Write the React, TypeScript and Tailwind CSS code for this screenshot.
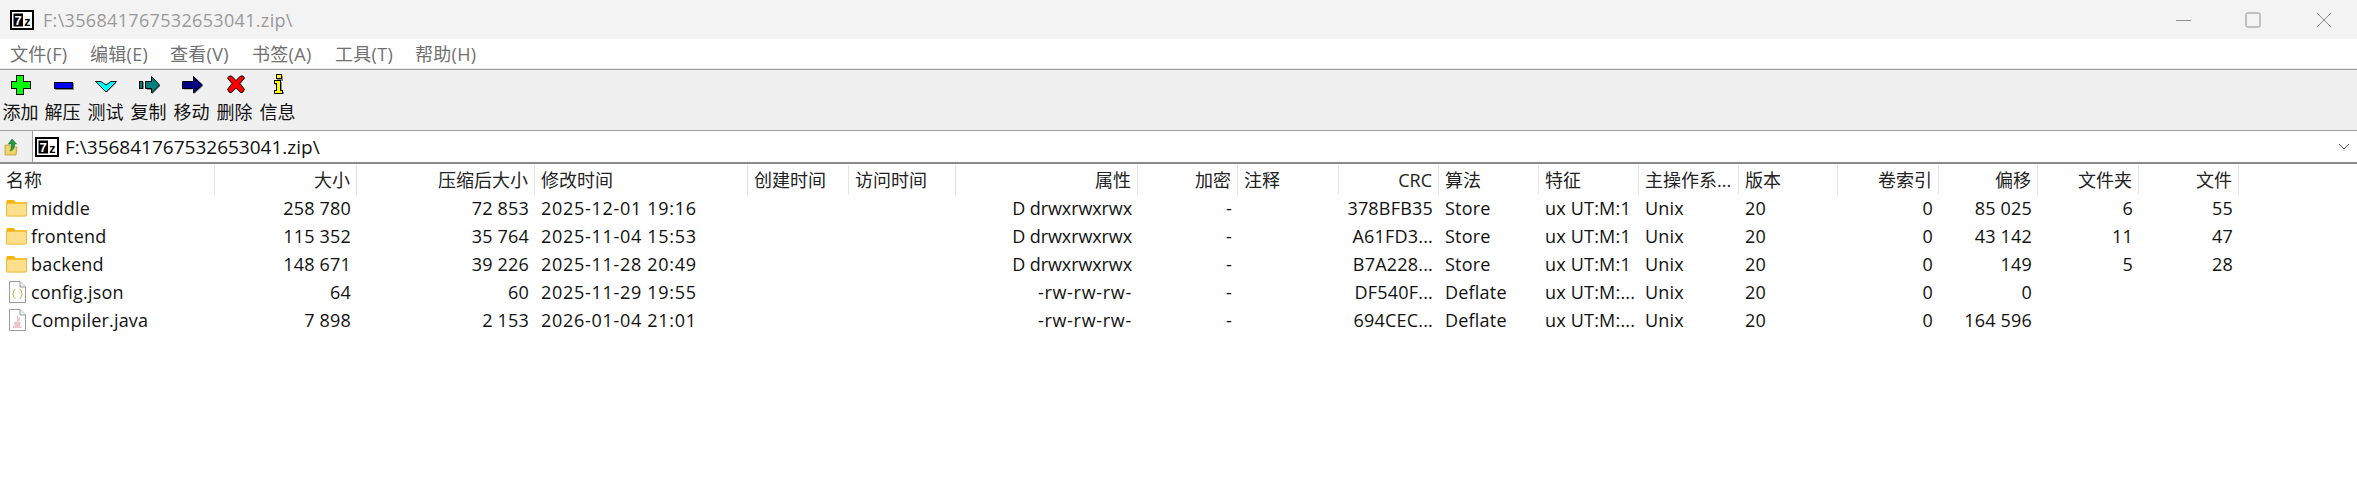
import React from "react";

const sans = "font-['Open_Sans','Noto_Sans_CJK_SC',sans-serif]";

function SevenZ({ className = "" }: { className?: string }) {
  return (
    <svg width="24" height="20" viewBox="0 0 24 20" className={className}>
      <rect x="1" y="1" width="22" height="18" fill="#fff" stroke="#000" strokeWidth="2" />
      <rect x="3.5" y="3.5" width="9.5" height="13" fill="#000" />
      <text x="8.2" y="14.6" fontSize="13" fontWeight="700" fontFamily="Liberation Sans" textAnchor="middle" fill="#fff">7</text>
      <text x="17.6" y="15.6" fontSize="12.5" fontWeight="700" fontFamily="Liberation Sans" textAnchor="middle" fill="#000">z</text>
    </svg>
  );
}

function ToolIcon({ children }: { children: React.ReactNode }) {
  return (
    <svg width="23" height="26" viewBox="0 0 23 26" className="block" shapeRendering="crispEdges">
      {children}
    </svg>
  );
}

const plus = "7,5 14,5 14,11 21,11 21,18 14,18 14,24 7,24 7,18 2,18 2,11 7,11";
const chevron = "1.5,11.5 7,11.5 12,15 17,11.5 22.5,11.5 12,22";
const copyHead = "8.5,11.5 14.5,11.5 14.5,6.5 22.5,15 14.5,23 14.5,18.5 8.5,18.5";
const moveHead = "2.5,11.5 13.5,11.5 13.5,6.5 22.5,15 13.5,23 13.5,18.5 2.5,18.5";
const cross = "6.5,6 8.5,6 13,10.5 17.5,6 20,6 21.5,8 17,13.5 21.5,19.5 19.5,22.5 17.5,22.5 13,18 8.5,22.5 6.5,22.5 4.5,19.5 9,13.5 4.5,8";

const icons: Record<string, React.ReactNode> = {
  add: (
    <ToolIcon>
      <polygon points="8,6 15,6 15,12 22,12 22,19 15,19 15,25 8,25 8,19 3,19 3,12 8,12" fill="#8a8a8a" />
      <polygon points={plus} fill="#00ff00" stroke="#000" />
    </ToolIcon>
  ),
  extract: (
    <ToolIcon>
      <rect x="4" y="13" width="19" height="7" fill="#8a8a8a" />
      <rect x="3.5" y="12.5" width="18" height="6" fill="#0000ff" stroke="#000" />
    </ToolIcon>
  ),
  test: (
    <ToolIcon>
      <polygon points="2.5,12.5 8,12.5 13,16 18,12.5 23,12.5 13,23" fill="#8a8a8a" />
      <g shapeRendering="auto">
        <polygon points={chevron} fill="#00ffff" stroke="#000" strokeWidth="0.9" />
      </g>
    </ToolIcon>
  ),
  copy: (
    <ToolIcon>
      <rect x="3" y="12" width="4" height="7" fill="#8a8a8a" />
      <polygon points="9.5,12.5 15,12.5 15,7.5 23,16 15,24 15,19.5 9.5,19.5" fill="#8a8a8a" />
      <rect x="2.5" y="11.5" width="3" height="7" fill="#008080" stroke="#000" />
      <g shapeRendering="auto">
        <polygon points={copyHead} fill="#008080" stroke="#000" />
      </g>
    </ToolIcon>
  ),
  move: (
    <ToolIcon>
      <g shapeRendering="auto">
        <polygon points="3.5,12.5 14.5,12.5 14.5,7.5 23,16 14.5,24 14.5,19.5 3.5,19.5" fill="#8a8a8a" />
        <polygon points={moveHead} fill="#000080" stroke="#000" />
      </g>
    </ToolIcon>
  ),
  del: (
    <ToolIcon>
      <g shapeRendering="auto">
        <polygon points={cross} fill="#ff0000" stroke="#000" strokeWidth="1" />
      </g>
    </ToolIcon>
  ),
  info: (
    <ToolIcon>
      <rect x="11" y="6" width="6" height="5" fill="#8a8a8a" />
      <polygon points="9,12 16,12 16,22 18,22 18,24 9,24 9,22 11,22 11,15 9,15" fill="#8a8a8a" />
      <rect x="10.5" y="4.5" width="5" height="4" fill="#ffff00" stroke="#000" />
      <polygon points="8.5,10.5 14.5,10.5 14.5,20.5 16.5,20.5 16.5,23 8.5,23 8.5,20.5 10.5,20.5 10.5,13 8.5,13" fill="#ffff00" stroke="#000" />
    </ToolIcon>
  ),
};

const tools = [
  ["添加", "add"],
  ["解压", "extract"],
  ["测试", "test"],
  ["复制", "copy"],
  ["移动", "move"],
  ["删除", "del"],
  ["信息", "info"],
];

const menus = [
  ["文件(F)", "w-[80px] pl-[10px]"],
  ["编辑(E)", "w-[80px] pl-[10px]"],
  ["查看(V)", "w-[82px] pl-[10px]"],
  ["书签(A)", "w-[83px] pl-[10px]"],
  ["工具(T)", "w-[80px] pl-[10px]"],
  ["帮助(H)", "w-[80px] pl-[10px]"],
];

type Col = { label: string; right?: boolean; extra?: string };
const cols: Col[] = [
  { label: "名称" },
  { label: "大小", right: true },
  { label: "压缩后大小", right: true },
  { label: "修改时间", extra: "tracking-[0.7px]" },
  { label: "创建时间" },
  { label: "访问时间" },
  { label: "属性", right: true, extra: "tracking-[-0.1px]" },
  { label: "加密", right: true },
  { label: "注释" },
  { label: "CRC", right: true },
  { label: "算法" },
  { label: "特征" },
  { label: "主操作系..." },
  { label: "版本" },
  { label: "卷索引", right: true },
  { label: "偏移", right: true },
  { label: "文件夹", right: true },
  { label: "文件", right: true },
];

const rows: { kind: string; cells: string[] }[] = [
  { kind: "folder", cells: ["middle", "258 780", "72 853", "2025-12-01 19:16", "", "", "D drwxrwxrwx", "-", "", "378BFB35", "Store", "ux UT:M:1", "Unix", "20", "0", "85 025", "6", "55"] },
  { kind: "folder", cells: ["frontend", "115 352", "35 764", "2025-11-04 15:53", "", "", "D drwxrwxrwx", "-", "", "A61FD3...", "Store", "ux UT:M:1", "Unix", "20", "0", "43 142", "11", "47"] },
  { kind: "folder", cells: ["backend", "148 671", "39 226", "2025-11-28 20:49", "", "", "D drwxrwxrwx", "-", "", "B7A228...", "Store", "ux UT:M:1", "Unix", "20", "0", "149", "5", "28"] },
  { kind: "json", cells: ["config.json", "64", "60", "2025-11-29 19:55", "", "", "-rw-rw-rw-", "-", "", "DF540F...", "Deflate", "ux UT:M:...", "Unix", "20", "0", "0", "", ""] },
  { kind: "java", cells: ["Compiler.java", "7 898", "2 153", "2026-01-04 21:01", "", "", "-rw-rw-rw-", "-", "", "694CEC...", "Deflate", "ux UT:M:...", "Unix", "20", "0", "164 596", "", ""] },
];

const gridCols =
  "grid grid-cols-[215px_142px_178px_213px_101px_107px_182px_100px_101px_100px_100px_100px_100px_99px_101px_99px_101px_100px]";

function FileIcon({ kind }: { kind: string }) {
  if (kind === "folder") {
    return (
      <svg width="22" height="18" viewBox="0 0 22 18">
        <path d="M0.5 2 Q0.5 0.5 2 0.5 H8 L10 3 H22 V5 H0.5 Z" fill="#f4b400" />
        <path d="M0.5 4 H21.5 V16.5 Q21.5 17.5 20.5 17.5 H1.5 Q0.5 17.5 0.5 16.5 Z" fill="#ffe08a" stroke="#f0b429" strokeWidth="1" />
      </svg>
    );
  }
  return (
    <svg width="18" height="22" viewBox="0 0 18 22">
      <path d="M1.5 0.5 H12 L17.5 6 V21.5 H1.5 Z" fill="#fff" stroke="#9a9a9a" />
      <path d="M12 0.5 V6 H17.5" fill="#f0f0f0" stroke="#9a9a9a" />
      {kind === "json" ? (
        <>
          <path d="M7.5 8.5 Q5.5 8.5 5.5 10.5 V12 L4.5 13 L5.5 14 V15.5 Q5.5 17 7.5 17" fill="none" stroke="#b5b84a" strokeWidth="1" />
          <path d="M11.5 8.5 Q13.5 8.5 13.5 10.5 V12 L14.5 13 L13.5 14 V15.5 Q13.5 17 11.5 17" fill="none" stroke="#b5b84a" strokeWidth="1" />
        </>
      ) : (
        <>
          <path d="M10 6.5 C8 9 11.5 10 9 12.5 M11.5 8.5 C10.5 10 12.5 10.5 10.5 12.5" fill="none" stroke="#e59a8f" strokeWidth="1" />
          <path d="M6 14 H12.5 M6.5 16 H12 M5 18 H13.5" fill="none" stroke="#dc8a90" strokeWidth="1" />
        </>
      )}
    </svg>
  );
}

export default function App() {
  return (
    <div className={`w-[2357px] h-[477px] bg-white overflow-hidden text-[18px] leading-[24px] tracking-[0.2px] text-[#111] ${sans}`}>
      {/* title bar */}
      <div className="h-[39px] bg-[#f3f3f3] flex items-center">
        <div className="flex items-center pl-[10px] w-[43px]">
          <SevenZ />
        </div>
        <span className="text-[#9a9a9a] tracking-[0.33px]">F:\356841767532653041.zip\</span>
        <div className="ml-auto flex items-center">
          <svg width="16" height="16" viewBox="0 0 16 16" className="mr-[53px]">
            <path d="M0 8.5 H15" stroke="#8e8e8e" />
          </svg>
          <svg width="16" height="16" viewBox="0 0 16 16" className="mr-[55px]">
            <rect x="1" y="1" width="14" height="14" rx="1.5" fill="none" stroke="#8e8e8e" />
          </svg>
          <svg width="16" height="16" viewBox="0 0 16 16" className="mr-[25px]">
            <path d="M1 1 L15 15 M15 1 L1 15" stroke="#8e8e8e" />
          </svg>
        </div>
      </div>
      {/* menu */}
      <div className="h-[30px] bg-white flex items-center border-b border-[#e6e6e6] text-[#707070] tracking-[0.3px]">
        {menus.map(([m, c]) => (
          <div key={m} className={c}>{m}</div>
        ))}
      </div>
      {/* toolbar */}
      <div className="h-[62px] bg-[#f0f0f0] border-y border-[#a0a0a0] flex">
        {tools.map(([label, ic], i) => (
          <div key={label} className={`${i === 0 ? "w-[41px]" : "w-[43px]"} h-full flex flex-col items-center`}>
            <div className="h-[30px] flex items-start justify-center">{icons[ic]}</div>
            <div className="leading-[24px] whitespace-nowrap text-[#111] tracking-normal">{label}</div>
          </div>
        ))}
      </div>
      {/* address */}
      <div className="h-[33px] flex border-b-2 border-[#8c8c8c] bg-[#f0f0f0]">
        <div className="w-[32px] flex items-center pl-[4px]">
          <svg width="16" height="18" viewBox="0 0 16 18">
            <path d="M1 7 H6 V9 H13 L12 17 H1 Z" fill="#f2d36b" stroke="#b89b3c" strokeWidth="0.8" />
            <path d="M8 1 L12.5 6 H10.5 C10.5 10 9.5 12 6 13 C7.5 11 7.5 9 7.5 6 H4.5 Z" fill="#1f9e3a" stroke="#0c6b22" strokeWidth="0.6" />
          </svg>
        </div>
        <div className="flex-1 bg-white border-l border-[#a0a0a0] flex items-center pl-[2px]">
          <SevenZ />
          <span className="ml-[6px] text-[19px] tracking-normal">F:\356841767532653041.zip\</span>
          <svg width="12" height="7" viewBox="0 0 12 7" className="ml-auto mr-[7px]">
            <path d="M1 1 L6 6 L11 1" fill="none" stroke="#555" />
          </svg>
        </div>
      </div>
      {/* header */}
      <div className={`${gridCols} h-[31px] pt-[1px]`}>
        {cols.map((c, i) => (
          <div
            key={i}
            className={`h-[30px] border-r border-[#e5e5e5] flex items-center text-[#222] whitespace-nowrap tracking-normal ${c.right ? "justify-end pr-[6px]" : "pl-[6px]"}`}
          >
            {c.label}
          </div>
        ))}
      </div>
      {/* rows */}
      {rows.map((r) => (
        <div key={r.cells[0]} className={`${gridCols} h-[28px]`}>
          {r.cells.map((v, i) => (
            <div
              key={i}
              className={`flex items-center pb-[2px] whitespace-nowrap ${cols[i].right ? "justify-end pr-[6px]" : "pl-[6px]"} ${v === "-rw-rw-rw-" ? "tracking-[0.7px]" : cols[i].extra ?? ""}`}
            >
              {i === 0 ? (
                <>
                  <span className="flex justify-center w-[21px] mr-[4px]">
                    <FileIcon kind={r.kind} />
                  </span>
                  {v}
                </>
              ) : (
                v
              )}
            </div>
          ))}
        </div>
      ))}
    </div>
  );
}
